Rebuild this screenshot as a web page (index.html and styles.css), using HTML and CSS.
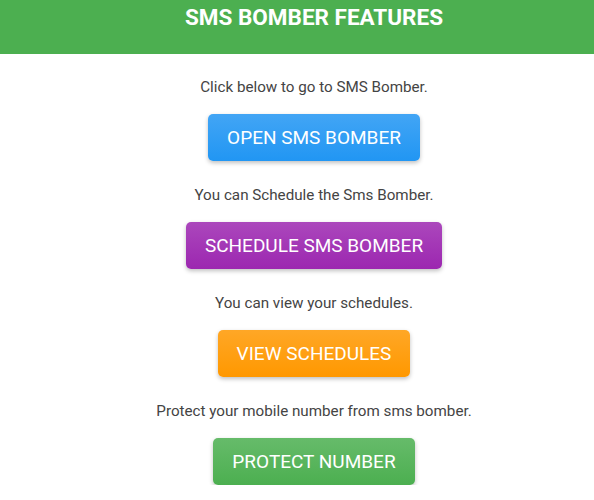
FILE: index.html
```html
<!DOCTYPE html>
<html lang="en">
<head>
    <meta charset="UTF-8">
    <meta name="viewport" content="width=device-width, initial-scale=1.0">
    <title>SMS Bomber Features</title>
    <link rel="stylesheet" href="styles.css">
</head>
<body>
    <div class="header">
        <h1>SMS BOMBER FEATURES</h1>
    </div>
    <div class="container">
        <div class="feature">
            <p>Click below to go to SMS Bomber.</p>
            <a href="#" class="btn btn-blue">OPEN SMS BOMBER</a>
        </div>
        <div class="feature">
            <p>You can Schedule the Sms Bomber.</p>
            <a href="#" class="btn btn-purple">SCHEDULE SMS BOMBER</a>
        </div>
        <div class="feature">
            <p>You can view your schedules.</p>
            <a href="#" class="btn btn-orange">VIEW SCHEDULES</a>
        </div>
        <div class="feature">
            <p>Protect your mobile number from sms bomber.</p>
            <a href="#" class="btn btn-green">PROTECT NUMBER</a>
        </div>
    </div>
</body>
</html>
```

FILE: styles.css
```css
body {
    font-family: Roboto, "Liberation Sans", sans-serif;
    margin: 0;
    background-color: white;
    color: #444;
}
.header {
    background-color: #4CAF50;
    height: 54px;
    padding-left: 34px;
    text-align: center;
}
.header h1 {
    margin: 0;
    padding-top: 4px;
    font-size: 22.5px;
    line-height: 26px;
    font-weight: bold;
    color: white;
}
.container {
    display: flex;
    flex-direction: column;
    align-items: center;
    gap: 23px;
    padding: 22px 0 0 34px;
}
.feature {
    display: flex;
    flex-direction: column;
    align-items: center;
}
.feature p {
    margin: 0 0 16px;
    font-size: 15.2px;
    line-height: 22px;
}
.btn {
    display: block;
    height: 47px;
    line-height: 47px;
    padding: 0 19px;
    font-size: 19px;
    color: white;
    text-decoration: none;
    border-radius: 5px;
    box-shadow: 0 2px 4px rgba(0, 0, 0, 0.25);
}
.btn-blue {
    background: linear-gradient(#42A5F5, #2196F3);
}
.btn-purple {
    background: linear-gradient(#AB47BC, #9C27B0);
}
.btn-orange {
    background: linear-gradient(#FFA726, #FF9800);
}
.btn-green {
    background: linear-gradient(#66BB6A, #4CAF50);
}
```
